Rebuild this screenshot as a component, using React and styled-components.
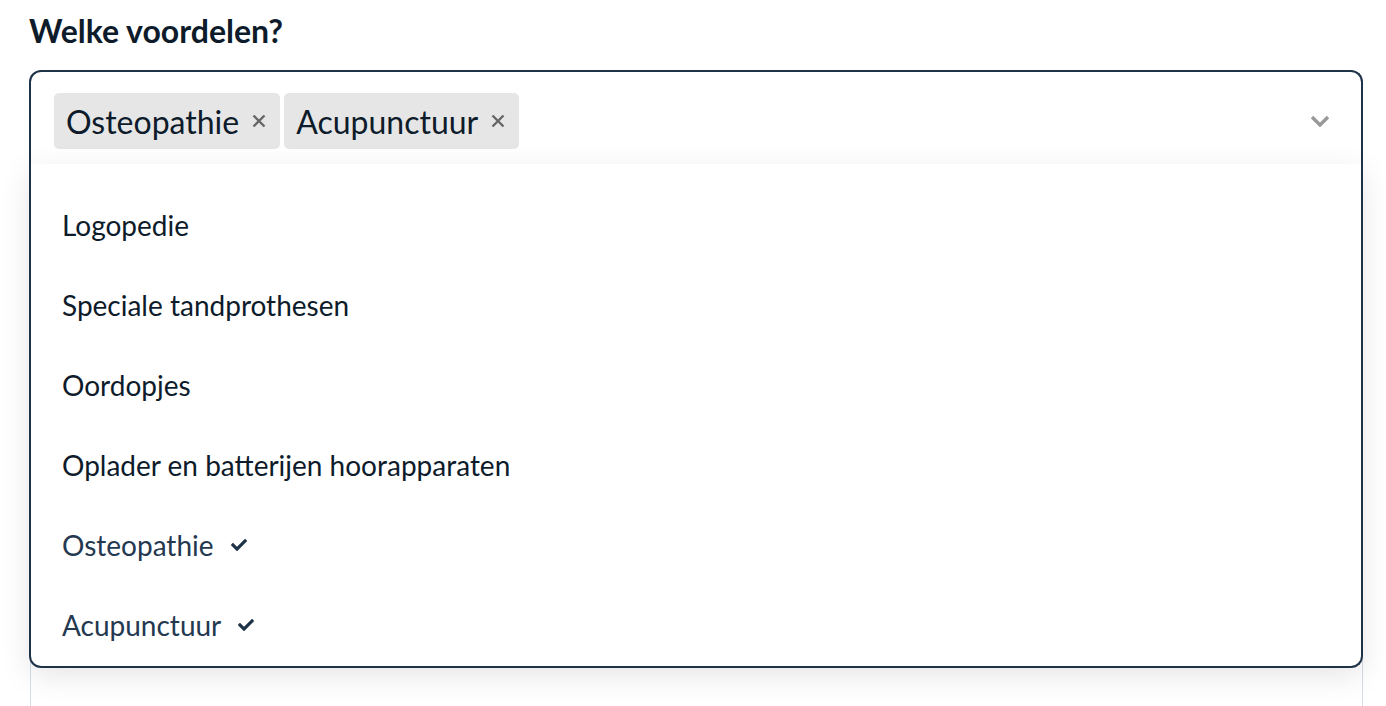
import styled, { createGlobalStyle } from "styled-components";
import { FaCheck } from "react-icons/fa";

const options = [
  { label: "Logopedie" },
  { label: "Speciale tandprothesen" },
  { label: "Oordopjes" },
  { label: "Oplader en batterijen hoorapparaten" },
  { label: "Osteopathie", selected: true },
  { label: "Acupunctuur", selected: true },
];

const chips = options.filter((o) => o.selected);

const App = () => {
  return (
    <Page>
      <GlobalStyle />
      <Heading>Welke voordelen?</Heading>
      <Field>
        <Control>
          <ChipList>
            {chips.map((c) => (
              <Chip key={c.label}>
                {c.label}
                <Remove viewBox="0 0 16 16">
                  <path d="M2.5 2.5 L13.5 13.5 M13.5 2.5 L2.5 13.5" />
                </Remove>
              </Chip>
            ))}
          </ChipList>
          <Chevron viewBox="0 0 20 12">
            <path d="M2 2 L10 10 L18 2" />
          </Chevron>
        </Control>
        <Menu>
          {options.map((o) => (
            <Option key={o.label} selected={o.selected}>
              {o.label}
              {o.selected && <FaCheck size={16} />}
            </Option>
          ))}
        </Menu>
      </Field>
      <NextField />
    </Page>
  );
};

const GlobalStyle = createGlobalStyle`
  body {
    margin: 0;
    background: #fff;
    font-family: Lato, "Open Sans", sans-serif;
    color: #0d1b2a;
    overflow: hidden;
  }
`;

const Page = styled.div`
  padding: 13px 23px 0 29px;
  height: 706px;
  box-sizing: border-box;
  overflow: hidden;
`;

const Heading = styled.h2`
  margin: 0 0 21px;
  font-size: 32px;
  line-height: 36px;
  font-weight: 700;
  color: #0d1b2a;
`;

const Field = styled.div`
  position: relative;
  z-index: 2;
`;

const Control = styled.div`
  display: flex;
  align-items: flex-start;
  justify-content: space-between;
  height: 94px;
  padding: 21px 23px 18px 23px;
  box-sizing: border-box;
  border: 2px solid #1e3348;
  border-bottom: none;
  border-radius: 12px 12px 0 0;
  background: #fff;
`;

const ChipList = styled.div`
  display: flex;
  gap: 4px;
`;

const Chip = styled.span`
  display: inline-flex;
  align-items: center;
  gap: 12px;
  height: 56px;
  padding: 0 13px 0 12px;
  border-radius: 5px;
  background: #e6e6e6;
  font-size: 32px;
  color: #0d1b2a;
`;

const Remove = styled.svg`
  width: 16px;
  height: 16px;
  fill: none;
  stroke: #666;
  stroke-width: 2.4;
`;

const Chevron = styled.svg`
  width: 20px;
  height: 12px;
  margin: 22px 8px 0 0;
  fill: none;
  stroke: #999;
  stroke-width: 3.4;
`;

const Menu = styled.div`
  position: absolute;
  top: 100%;
  left: 0;
  right: 0;
  padding-top: 21px;
  height: 481px;
  overflow: hidden;
  background: #fff;
  border: 2px solid #1e3348;
  border-top: none;
  border-radius: 0 0 12px 12px;
  box-shadow: 0 8px 30px rgba(0, 0, 0, 0.1);
`;

const Option = styled.div`
  display: flex;
  align-items: center;
  gap: 17px;
  flex-shrink: 0;
  height: 80px;
  padding: 0 31px;
  font-size: 28px;
  color: ${({ selected }) => (selected ? "#243850" : "#0d1b2a")};

  svg {
    color: #1e3348;
  }
`;

const NextField = styled.div`
  margin: 60px 0 0 1px;
  height: 700px;
  border: 1px solid #d5dbe5;
  border-radius: 8px;
`;

export default App;
